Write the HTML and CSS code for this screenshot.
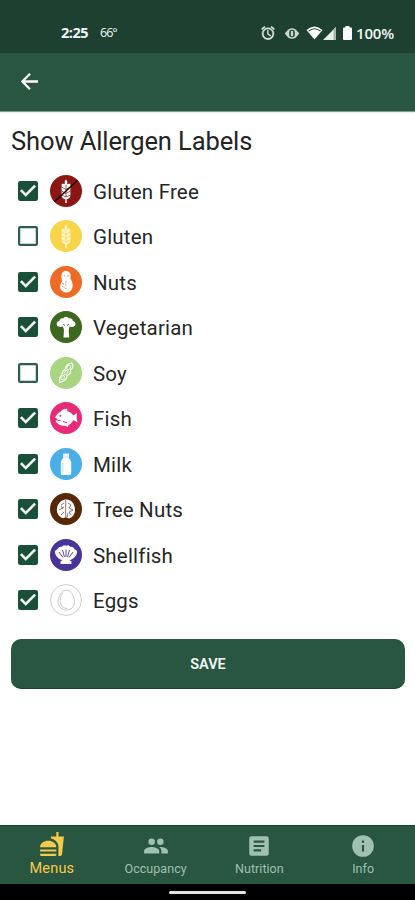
FILE: index.html
```html
<!DOCTYPE html>
<html lang="en">
<head>
<meta charset="utf-8">
<title>Allergen Labels</title>
<link rel="stylesheet" href="styles.css">
</head>
<body>
<svg class="defs" aria-hidden="true">
  <symbol id="on" viewBox="3 3 18 18"><path fill="#195039" d="M19 3H5a2 2 0 0 0-2 2v14a2 2 0 0 0 2 2h14a2 2 0 0 0 2-2V5a2 2 0 0 0-2-2z"/><path fill="#fff" stroke="#fff" stroke-width=".4" d="M10 17l-5-5 1.410-1.410L10 14.170l7.590-7.590L19 8z"/></symbol>
  <symbol id="off" viewBox="3 3 18 18"><path fill="#2c5e49" d="M19 5v14H5V5h14m0-2H5a2 2 0 0 0-2 2v14a2 2 0 0 0 2 2h14a2 2 0 0 0 2-2V5a2 2 0 0 0-2-2z"/></symbol>
  <symbol id="wheat" viewBox="0 0 32 32"><path fill="currentColor" d="M16 4.500c1.700 1.800 1.600 3.500.8 5 1.200-.7 2.300-.8 3.600-.4v12c-.5 2-2 3-3.800 3.200l.2 3.700h-1.600l.2-3.700c-1.800-.2-3.300-1.200-3.800-3.200v-12c1.300-.4 2.400-.3 3.600.4-.8-1.500-.9-3.200.8-5z"/><path stroke="var(--disc)" stroke-width=".7" fill="none" d="M16 10v12M11.500 12l4.500 2.500 4.500-2.500M11.500 16l4.500 2.500 4.500-2.500M11.500 20l4.500 2 4.500-2"/></symbol>
</svg>
<header class="status">
  <span class="time">2:25</span><span class="temp">66°</span>
  <span class="indicators">
    <svg class="alarm" viewBox="0 0 24 24"><path fill="#e3ebe7" stroke="#e3ebe7" stroke-width=".6" d="M22 5.700l-4.600-3.900-1.300 1.500 4.600 3.900zM7.900 3.400L6.600 1.900 2 5.700l1.300 1.500zM12.500 8H11v6l4.700 2.900.8-1.300-4-2.300zM12 4a9 9 0 1 0 0 18 9 9 0 0 0 0-18zm0 16a7 7 0 1 1 0-14 7 7 0 0 1 0 14z"/></svg>
    <svg class="eye" viewBox="0 0 16 12"><path fill="#cbd6d0" d="M0 6l4-4.500Q8-1 12 1.500L16 6l-4 4.500Q8 13 4 10.500z"/><rect x="5" y="2" width="6" height="8" rx="2.500" fill="#1d4031"/><rect x="6.700" y="3" width="2.600" height="6" rx="1" fill="#cbd6d0"/></svg>
    <svg class="wifi" viewBox="0 0 16 14"><path fill="#fff" d="M0 4Q8-3 16 4L8 13.500z"/><path fill="none" stroke="#1d4031" stroke-width="1.100" d="M2 5.200Q8 .2 14 5.200"/></svg>
    <svg class="signal" viewBox="0 0 13 13"><path fill="#e8efeb" d="M13 0v13H0z"/><path fill="#a7b8af" d="M10.500 2.500L13 0v13h-2.500z"/></svg>
    <svg class="battery" viewBox="0 0 9 14"><path fill="#fff" d="M2.500 0h4v1.500H8q1 0 1 1V13q0 1-1 1H1q-1 0-1-1V2.500q0-1 1-1h1.500z"/></svg>
    <span class="percent">100%</span>
  </span>
</header>
<div class="appbar"><svg viewBox="0 0 17 17"><path fill="none" stroke="#fff" stroke-width="2.300" d="M17 8.500H1.500M9 .8L1.400 8.500 9 16.200"/></svg></div>
<main>
  <h1>Show Allergen Labels</h1>
  <ul>
    <li><svg class="box"><use href="#on"/></svg><svg class="disc maroon" viewBox="0 0 32 32"><use href="#wheat"/><path stroke="#180606" stroke-width="1.600" d="M4.500 26.500L27.500 5.500"/></svg><span>Gluten Free</span></li>
    <li><svg class="box"><use href="#off"/></svg><svg class="disc yellow" viewBox="0 0 32 32"><use href="#wheat"/></svg><span>Gluten</span></li>
    <li><svg class="box"><use href="#on"/></svg><svg class="disc orange" viewBox="0 0 32 32"><path fill="#fff" d="M15.500 5c3.500-.3 5.800 2.500 5 5.500-.5 2.200.3 3 1.200 4.500 2.500 5 .2 11.500-5.200 11.500-5 0-7.800-4.500-5.800-8.500.9-1.800 1.700-2.500 1-5C10.700 9 12 5.300 15.500 5z"/><path stroke="#ee6b25" stroke-width=".9" stroke-dasharray="1.500 1.200" d="M14 9l1 2M12.500 17.500l5 2M12 20.500l5 2.500M16 15v3M18 9v2" fill="none"/></svg><span>Nuts</span></li>
    <li><svg class="box"><use href="#on"/></svg><svg class="disc green" viewBox="0 0 32 32"><path fill="#fff" d="M12.700 15.500c-2.500 1-5.700.3-6-2.300-.2-1.800 1-3.200 2.700-3.300.2-2 2.200-3 3.800-2.400 1.300-2.300 4.500-2.300 5.700 0 2-.7 3.700.5 3.900 2.400 1.700.1 3 1.500 2.700 3.300-.3 2.500-3.300 3.300-5.700 2.300-.8 1.300-1 2.500-1 4.500l.4 6.500h-5.700l.4-6.500c0-2-.2-3.300-1.200-4.500z"/><path fill="none" stroke="#3c681f" d="M13.500 13l1 1.500M18.500 13l-1 1.500"/></svg><span>Vegetarian</span></li>
    <li><svg class="box"><use href="#off"/></svg><svg class="disc lime" viewBox="0 0 32 32"><path fill="none" stroke="#fff" stroke-width="1.200" d="M21.500 6c2.500 2 1.500 5-1 7 .4 2.500-.8 4.500-3.300 5.500-.3 3.500-3.700 6-7.200 7-1.200-3.200-.5-5.700 2-7.500-.2-2.500.9-4.300 3.300-5.500.3-3.200 2.700-6.500 6.200-6.500z"/><g fill="none" stroke="#fff" stroke-width=".8"><ellipse cx="18.700" cy="10.500" rx="1.700" ry="2.600" transform="rotate(32 18.700 10.500)"/><ellipse cx="15.900" cy="15.700" rx="1.600" ry="2.300" transform="rotate(35 15.900 15.700)"/><ellipse cx="12.800" cy="20.700" rx="1.600" ry="2.300" transform="rotate(32 12.800 20.700)"/></g></svg><span>Soy</span></li>
    <li><svg class="box"><use href="#on"/></svg><svg class="disc pink" viewBox="0 0 32 32"><path fill="#fff" d="M5 15.500c1.500-3 3.500-5 6-6C12 7.500 14.500 6.500 17.500 7l-.5 2c3 .7 5 2.300 6.300 4.500L27 11q-1 5 .5 9.500L23.300 18c-1 2.500-2.700 4-4.800 5l-.5 2-3.500-1.300c-4 .3-7-1.700-9-4.700l2.500-1.500z"/><circle cx="10.300" cy="13.800" r="1" fill="#e82b79"/><path d="M7.500 18.500h3M13 19.500l4 1.200" stroke="#e82b79" fill="none"/></svg><span>Fish</span></li>
    <li><svg class="box"><use href="#on"/></svg><svg class="disc blue" viewBox="0 0 32 32"><path fill="#fff" d="M13 5.500h6v3.200l-.3.600c0 2 2.500 2.500 2.500 5v11.200q0 1.500-1.500 1.500h-7.400q-1.500 0-1.500-1.500V14.300c0-2.500 2.500-3 2.500-5l-.3-.6z"/><path fill="none" stroke="#94cdf2" stroke-width=".7" d="M13.300 9h5.400M12.800 15v9"/></svg><span>Milk</span></li>
    <li><svg class="box"><use href="#on"/></svg><svg class="disc brown" viewBox="0 0 32 32"><path fill="#fff" d="M15.500 6.500c5-.7 9 3.300 9.500 9.500.3 5-2.500 8.500-6 9.500l-3-1.300-3 1c-4-1.200-6.700-5-6-9.700.5-4.700 3.800-8.500 8.500-9z"/><path fill="none" stroke="#795443" stroke-width=".8" d="M15.700 7v18M14 10l-3 2M14 14l-5 3M14 19l-3 3M18 10l3 2-2 3 4 2-4 2 2 3M11 13l2 3M18 20l-1 4"/></svg><span>Tree Nuts</span></li>
    <li><svg class="box"><use href="#on"/></svg><svg class="disc purple" viewBox="0 0 32 32"><path fill="#fff" d="M12.500 21C9 20.500 6 17.500 5 14c-.5-2 .8-3.500 2.500-3.800.8-2 2.500-2.800 4.200-2.400 1.300-1.800 3-2 4.300-1.100 1.300-.9 3-.7 4.300 1.100 1.700-.4 3.400.4 4.200 2.400 1.700.3 3 1.800 2.500 3.800-1 3.500-4 6.500-7.500 7l2 1.500v2.500h-11v-2.500z"/><path fill="none" stroke="#49359a" stroke-width=".9" d="M16 10.500V18M12.500 11l2 7M19.500 11l-2 7M9 13l4 5.500M23 13l-4 5.500"/></svg><span>Shellfish</span></li>
    <li><svg class="box"><use href="#on"/></svg><svg class="disc white" viewBox="0 0 32 32"><circle cx="16" cy="16" r="15.500" fill="none" stroke="#bdbdbd" stroke-width=".8"/><path fill="none" stroke="#c4c4c4" stroke-width=".9" d="M16.500 6c4.500.3 8 6.300 8 12 0 5-3.500 8-8 8s-8.500-3-8.500-8c0-5.700 4-11.700 8.500-12z"/><path fill="none" stroke="#c0c0c0" stroke-width=".8" d="M12.500 9c-2.500 3.500-3 8-1.500 11.500 1 2.500 3 4 6 4"/></svg><span>Eggs</span></li>
  </ul>
  <button type="button">SAVE</button>
</main>
<nav>
  <a class="active"><svg viewBox="0 0 24 24"><path fill="currentColor" d="M1 21.980c0 .56.450 1.010 1.010 1.010H15c.56 0 1.010-.45 1.010-1.010V21H1v.98zM8.500 8.990C4.750 8.990 1 11 1 15h15c0-4-3.750-6.010-7.500-6.010zM1 17h15v2H1zM18 5V1h-2v4h-5l.23 2c1.710.47 3.310 1.320 4.270 2.260 1.440 1.420 2.430 2.890 2.430 5.290v8.440h1.720c.84 0 1.530-.64 1.630-1.460L23 5h-5z"/></svg><span>Menus</span></a>
  <a><svg viewBox="0 0 24 24"><path fill="currentColor" d="M16 11a3 3 0 1 0 0-6 3 3 0 0 0 0 6zm-8 0a3 3 0 1 0 0-6 3 3 0 0 0 0 6zm0 2c-2.330 0-7 1.170-7 3.500V19h14v-2.500c0-2.330-4.670-3.500-7-3.500zm8 0c-.29 0-.62.020-.97.050 1.160.84 1.970 1.970 1.970 3.450V19h6v-2.500c0-2.330-4.670-3.500-7-3.500z"/></svg><span>Occupancy</span></a>
  <a><svg viewBox="0 0 24 24"><path fill="currentColor" d="M19 3H5a2 2 0 0 0-2 2v14a2 2 0 0 0 2 2h14a2 2 0 0 0 2-2V5a2 2 0 0 0-2-2zm-5 14H7v-2h7v2zm3-4H7v-2h10v2zm0-4H7V7h10v2z"/></svg><span>Nutrition</span></a>
  <a><svg viewBox="0 0 24 24"><path fill="currentColor" d="M12 2a10 10 0 1 0 0 20 10 10 0 0 0 0-20zm1 15h-2v-6h2v6zm0-8h-2V7h2v2z"/></svg><span>Info</span></a>
</nav>
<footer><i></i></footer>
</body>
</html>
```

FILE: styles.css
```css
* { box-sizing: border-box; }
body { margin: 0; width: 415px; height: 900px; display: flex; flex-direction: column; background: #fff; font-family: Roboto, sans-serif; overflow: hidden; }
.defs { display: none; }
.status { height: 53px; flex: none; background: #1d4031; color: #f2f6f4; display: flex; align-items: center; padding: 13px 20px 0 61px; }
.time { font: 700 14.5px/20px "Open Sans", sans-serif; width: 39px; letter-spacing: -.5px; }
.temp { font: 12.5px/20px "Open Sans", sans-serif; letter-spacing: -1px; }
.indicators { margin-left: auto; display: flex; align-items: center; }
.alarm { width: 16px; height: 16px; margin-right: 8px; }
.eye { width: 16px; height: 11px; margin-right: 6px; }
.wifi { width: 17px; height: 14px; }
.signal { width: 13px; height: 13px; margin-right: 7px; }
.battery { width: 9px; height: 14px; margin-right: 4px; }
.percent { font: 600 15px/20px "Open Sans", sans-serif; width: 39px; letter-spacing: -.2px; white-space: nowrap; }
.appbar { height: 58px; flex: none; background: #285641; padding: 20px 21px; box-shadow: 0 1px 1px #82998d; }
.appbar svg { width: 17px; height: 17px; display: block; }
main { flex: 1; padding: 13px 10px 0 11px; }
h1 { margin: 0; font-size: 25.5px; line-height: 34px; font-weight: 400; letter-spacing: -.1px; color: #242424; white-space: nowrap; }
ul { list-style: none; margin: 10px 0 0; padding: 0; }
li { height: 45.5px; display: flex; align-items: center; padding-left: 7px; font-size: 20.5px; letter-spacing: .2px; color: #262626; }
li span { padding-top: 2px; white-space: nowrap; }
.box { width: 20px; height: 20px; margin-right: 12px; }
.disc { width: 32px; height: 32px; border-radius: 50%; margin-right: 11px; color: #fff; background: var(--disc); }
.maroon { --disc: #8c1712; }
.yellow { --disc: #f8d449; color: #fff5c8; }
.orange { --disc: #ee6b25; }
.green { --disc: #3c681f; }
.lime { --disc: #a8d581; }
.pink { --disc: #e82b79; }
.blue { --disc: #4aaee9; }
.brown { --disc: #562806; }
.purple { --disc: #49359a; }
.white { --disc: #fff; }
button { display: block; width: 100%; height: 50px; margin-top: 16px; padding: 1px 0 0; border: 0; border-bottom: 1px solid #174630; border-radius: 10px; background: #285641; color: #f4f8f5; font: 600 14.5px Roboto, sans-serif; }
nav { height: 59px; flex: none; background: #285641; border-top: 1px solid #174630; display: grid; grid-template-columns: repeat(4, 1fr); color: #a0c0b0; }
nav a { display: flex; flex-direction: column; align-items: center; padding-top: 7px; }
nav svg { width: 26px; height: 26px; }
nav span { font-size: 12.5px; line-height: 16px; margin-top: 2px; letter-spacing: .05px; }
nav .active { color: #f6ca4b; padding-top: 5px; }
.active span { font-size: 14.5px; margin-top: 4px; letter-spacing: .2px; }
footer { height: 16px; flex: none; background: #000; display: flex; justify-content: center; padding-top: 7px; }
footer i { width: 77px; height: 3px; border-radius: 2px; background: #e4e4e4; }
```
